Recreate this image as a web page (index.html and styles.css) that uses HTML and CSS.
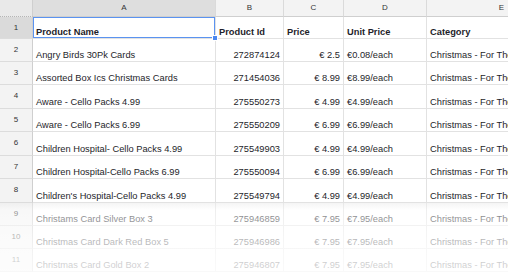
FILE: index.html
```html
<!DOCTYPE html>
<html>
<head>
<meta charset="utf-8">
<link rel="stylesheet" href="styles.css">
</head>
<body>
<div class="sheet">
  <div class="grid">
    <div class="corner"></div>
    <div class="colhead sel">A</div>
    <div class="colhead">B</div>
    <div class="colhead">C</div>
    <div class="colhead">D</div>
    <div class="colhead last">E</div>

    <div class="rowhead sel">1</div>
    <div class="cell b active">Product Name</div>
    <div class="cell b">Product Id</div>
    <div class="cell b">Price</div>
    <div class="cell b">Unit Price</div>
    <div class="cell b last">Category</div>

    <div class="rowhead">2</div>
    <div class="cell">Angry Birds 30Pk Cards</div>
    <div class="cell num">272874124</div>
    <div class="cell num">€ 2.5</div>
    <div class="cell">€0.08/each</div>
    <div class="cell last">Christmas - For The Home</div>

    <div class="rowhead">3</div>
    <div class="cell">Assorted Box Ics Christmas Cards</div>
    <div class="cell num">271454036</div>
    <div class="cell num">€ 8.99</div>
    <div class="cell">€8.99/each</div>
    <div class="cell last">Christmas - For The Home</div>

    <div class="rowhead">4</div>
    <div class="cell">Aware - Cello Packs 4.99</div>
    <div class="cell num">275550273</div>
    <div class="cell num">€ 4.99</div>
    <div class="cell">€4.99/each</div>
    <div class="cell last">Christmas - For The Home</div>

    <div class="rowhead">5</div>
    <div class="cell">Aware - Cello Packs 6.99</div>
    <div class="cell num">275550209</div>
    <div class="cell num">€ 6.99</div>
    <div class="cell">€6.99/each</div>
    <div class="cell last">Christmas - For The Home</div>

    <div class="rowhead">6</div>
    <div class="cell">Children Hospital- Cello Packs 4.99</div>
    <div class="cell num">275549903</div>
    <div class="cell num">€ 4.99</div>
    <div class="cell">€4.99/each</div>
    <div class="cell last">Christmas - For The Home</div>

    <div class="rowhead">7</div>
    <div class="cell">Children Hospital-Cello Packs 6.99</div>
    <div class="cell num">275550094</div>
    <div class="cell num">€ 6.99</div>
    <div class="cell">€6.99/each</div>
    <div class="cell last">Christmas - For The Home</div>

    <div class="rowhead">8</div>
    <div class="cell">Children's Hospital-Cello Packs 4.99</div>
    <div class="cell num">275549794</div>
    <div class="cell num">€ 4.99</div>
    <div class="cell">€4.99/each</div>
    <div class="cell last">Christmas - For The Home</div>

    <div class="rowhead">9</div>
    <div class="cell">Christams Card Silver Box 3</div>
    <div class="cell num">275946859</div>
    <div class="cell num">€ 7.95</div>
    <div class="cell">€7.95/each</div>
    <div class="cell last">Christmas - For The Home</div>

    <div class="rowhead">10</div>
    <div class="cell">Christmas Card Dark Red Box 5</div>
    <div class="cell num">275946986</div>
    <div class="cell num">€ 7.95</div>
    <div class="cell">€7.95/each</div>
    <div class="cell last">Christmas - For The Home</div>

    <div class="rowhead">11</div>
    <div class="cell">Christmas Card Gold Box 2</div>
    <div class="cell num">275946807</div>
    <div class="cell num">€ 7.95</div>
    <div class="cell">€7.95/each</div>
    <div class="cell last">Christmas - For The Home</div>
  </div>
  <div class="handle"></div>
  <div class="fade"></div>
</div>
</body>
</html>
```

FILE: styles.css
```css
html, body {
  margin: 0;
  padding: 0;
  background: #fff;
}
body {
  width: 508px;
  height: 272px;
  overflow: hidden;
  font-family: "Liberation Sans", Arial, sans-serif;
}
.sheet {
  position: relative;
  width: 508px;
  height: 272px;
  overflow: hidden;
}
.grid {
  display: grid;
  grid-template-columns: 33px 183px 68px 60px 83px 150px;
  grid-template-rows: 17px 22px 23px 23px 24px 23px 24px 23px 24px 23px 23px 23px;
}
.grid > div {
  box-sizing: border-box;
  overflow: hidden;
  white-space: nowrap;
}
.corner {
  background: #e9e9e9;
  border-right: 1px solid #cfcfcf;
  border-bottom: 1px dotted #b5b5b5;
}
.colhead {
  background: #f3f3f3;
  border-right: 1px solid #dadada;
  border-bottom: 1px solid #cfcfcf;
  font-size: 8px;
  color: #333;
  text-align: center;
  line-height: 16px;
}
.colhead.sel {
  background: #dedede;
}
.rowhead {
  background: #f3f3f3;
  border-right: 1px solid #cfcfcf;
  border-bottom: 1px solid #dcdcdc;
  font-size: 8px;
  color: #333;
  text-align: center;
  padding-top: 6px;
}
.rowhead.sel {
  background: #dadada;
}
.cell {
  border-right: 1px solid #e2e2e2;
  border-bottom: 1px solid #e2e2e2;
  font-size: 9.3px;
  color: #1e1e2a;
  padding: 0 3px 1px 3px;
  display: flex;
  align-items: flex-end;
}
.cell.b {
  font-weight: bold;
}
.cell.num {
  justify-content: flex-end;
}
.cell.last {
  border-right: none;
}
.cell.active {
  box-shadow: inset 0 0 0 1px #5b93f0;
}
.handle {
  position: absolute;
  left: 213px;
  top: 36px;
  width: 4px;
  height: 4px;
  background: #4d88f0;
  border: 1px solid #fff;
  box-sizing: content-box;
  margin: -1px 0 0 -1px;
}
.fade {
  position: absolute;
  left: 0;
  top: 203px;
  width: 508px;
  height: 69px;
  background: linear-gradient(to bottom,
    rgba(236, 236, 236, 0.55) 0px,
    rgba(255, 255, 255, 0.42) 7px,
    rgba(255, 255, 255, 0.62) 30px,
    rgba(255, 255, 255, 0.74) 50px,
    rgba(255, 255, 255, 0.8) 69px);
}
```
